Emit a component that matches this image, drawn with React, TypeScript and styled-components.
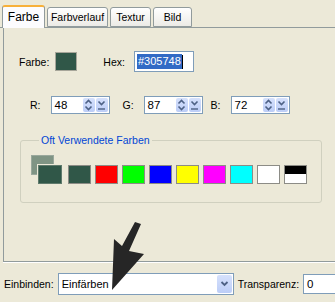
import styled, { createGlobalStyle } from 'styled-components';

const GlobalStyle = createGlobalStyle`
  html, body {
    margin: 0;
    padding: 0;
    background: #ece9d8;
  }
  body {
    font-family: "Liberation Sans", Arial, sans-serif;
    font-size: 10.5px;
    color: #000;
  }
`;

const swatches = ['#305748', '#ff0000', '#00ff00', '#0000ff', '#ffff00', '#ff00ff', '#00ffff', '#ffffff'];

const UpDownIcon = () => (
  <svg width="9" height="12" viewBox="0 0 9 12">
    <path d="M1.5 4.5 L4.5 1.5 L7.5 4.5" fill="none" stroke="#4d6185" strokeWidth="1.6" />
    <path d="M1.5 7.5 L4.5 10.5 L7.5 7.5" fill="none" stroke="#4d6185" strokeWidth="1.6" />
  </svg>
);

const DownLineIcon = () => (
  <svg width="9" height="12" viewBox="0 0 9 12">
    <path d="M1.5 2.5 L4.5 5.5 L7.5 2.5" fill="none" stroke="#4d6185" strokeWidth="1.6" />
    <path d="M1 10 H8" stroke="#4d6185" strokeWidth="1.4" />
  </svg>
);

const ChevronIcon = () => (
  <svg width="9" height="8" viewBox="0 0 9 8">
    <path d="M1.5 2 L4.5 5 L7.5 2" fill="none" stroke="#4d6185" strokeWidth="1.8" />
  </svg>
);

const SpinField = ({ label, value, ml }: { label: string; value: string; ml: number }) => (
  <Field $ml={ml}>
    <FieldLabel>{label}</FieldLabel>
    <SpinBox>
      <SpinValue>{value}</SpinValue>
      <SpinButton>
        <UpDownIcon />
      </SpinButton>
      <SpinButton>
        <DownLineIcon />
      </SpinButton>
    </SpinBox>
  </Field>
);

export default function App() {
  return (
    <Window>
      <GlobalStyle />
      <TabStrip>
        <Tab $active $width={43}>Farbe</Tab>
        <Tab $width={61}>Farbverlauf</Tab>
        <Tab $width={41}>Textur</Tab>
        <Tab $width={39}>Bild</Tab>
      </TabStrip>
      <Panel>
        <ColorRow>
          <Label>Farbe:</Label>
          <CurrentColor />
          <Label $ml={26}>Hex:</Label>
          <HexInput>
            <Selected>#305748</Selected>
            <Caret />
          </HexInput>
        </ColorRow>
        <RgbRow>
          <SpinField label="R:" value="48" ml={22} />
          <SpinField label="G:" value="87" ml={13} />
          <SpinField label="B:" value="72" ml={8} />
        </RgbRow>
        <Group>
          <Legend>Oft Verwendete Farben</Legend>
          <SwatchRow>
            <Compound>
              <BackSquare />
              <FrontSquare />
            </Compound>
            {swatches.map((c, i) => (
              <Swatch key={i} style={{ background: c }} />
            ))}
            <SplitSwatch />
          </SwatchRow>
        </Group>
      </Panel>
      <BottomRow>
        <Label>Einbinden:</Label>
        <Combo>
          <ComboText>Einfärben</ComboText>
          <ComboButton>
            <ChevronIcon />
          </ComboButton>
        </Combo>
        <Label $ml={4}>Transparenz:</Label>
        <SmallSpin>
          <SpinValue>0</SpinValue>
          <SpinButton>
            <UpDownIcon />
          </SpinButton>
        </SmallSpin>
      </BottomRow>
      <Pointer width="40" height="72" viewBox="0 0 40 72">
        <polygon points="25,0 31,2 19,29 34,32 2,68 4,17 12,24" fill="#262626" />
      </Pointer>
    </Window>
  );
}

const Window = styled.div`
  position: relative;
  width: 335px;
  height: 302px;
  overflow: hidden;
  padding-top: 5px;
  box-sizing: border-box;
  background: #ece9d8;
`;

const TabStrip = styled.div`
  display: flex;
  align-items: flex-end;
  height: 22px;
  padding-left: 2px;
  border-bottom: 1px solid #919b9c;
`;

const Tab = styled.div<{ $active?: boolean; $width: number }>`
  box-sizing: border-box;
  width: ${(p) => p.$width}px;
  height: ${(p) => (p.$active ? 23 : 20)}px;
  margin-bottom: ${(p) => (p.$active ? -1 : 0)}px;
  margin-right: 2px;
  padding-top: 3px;
  text-align: center;
  font-size: ${(p) => (p.$active ? 12 : 10.5)}px;
  border: 1px solid #919b9c;
  border-bottom: ${(p) => (p.$active ? 'none' : '1px solid #919b9c')};
  border-top: ${(p) => (p.$active ? '2px solid #f7b039' : '1px solid #919b9c')};
  border-radius: 3px 3px 0 0;
  background: ${(p) => (p.$active ? '#fcfcfe' : 'linear-gradient(#ffffff, #ecebe6)')};
  white-space: nowrap;
`;

const Panel = styled.div`
  margin-left: 3px;
  height: 234px;
  padding: 23px 0 0 15px;
  box-sizing: border-box;
  border-left: 1px solid #919b9c;
  border-bottom: 1px solid #919b9c;
  box-shadow: 0 1px 0 #ffffff;
`;

const ColorRow = styled.div`
  display: flex;
  align-items: center;
  height: 21px;
`;

const Label = styled.span<{ $ml?: number }>`
  flex-shrink: 0;
  margin-left: ${(p) => p.$ml ?? 0}px;
  white-space: nowrap;
`;

const CurrentColor = styled.div`
  width: 20px;
  height: 17px;
  margin-left: 6px;
  background: #305748;
  border: 1px solid #a7a69a;
`;

const HexInput = styled.div`
  display: flex;
  align-items: center;
  width: 60px;
  height: 21px;
  margin-left: 9px;
  padding-left: 2px;
  box-sizing: border-box;
  border: 1px solid #7f9db9;
  background: #fff;
  font-size: 11px;
`;

const Selected = styled.span`
  background: #316ac5;
  color: #fff;
  line-height: 15px;
  padding: 0 1px;
`;

const Caret = styled.span`
  width: 1px;
  height: 14px;
  background: #000;
`;

const RgbRow = styled.div`
  display: flex;
  align-items: center;
  height: 18px;
  margin-top: 24px;
  margin-left: -11px;
`;

const Field = styled.div<{ $ml: number }>`
  display: flex;
  align-items: center;
  margin-left: ${(p) => p.$ml}px;
`;

const FieldLabel = styled.span`
  margin-right: 10px;
`;

const SpinBox = styled.div`
  display: flex;
  flex-shrink: 0;
  align-items: center;
  gap: 1px;
  width: 59px;
  height: 18px;
  padding: 0 1px 0 3px;
  box-sizing: border-box;
  border: 1px solid #7f9db9;
  background: #fff;
`;

const SpinValue = styled.span`
  flex: 1;
  font-size: 11.5px;
`;

const SpinButton = styled.div`
  display: flex;
  align-items: center;
  justify-content: center;
  width: 12px;
  height: 14px;
  border-radius: 2px;
  background: linear-gradient(#d6e1fc, #bccdf7);
`;

const Group = styled.fieldset`
  width: 302px;
  margin: 20px 0 0 1px;
  padding: 8px 0 18px 10px;
  box-sizing: border-box;
  border: 1px solid #d0d0bf;
  border-radius: 3px;
`;

const Legend = styled.legend`
  padding: 0 2px;
  margin-left: 8px;
  color: #0046d5;
  font-size: 10.5px;
  line-height: 13px;
`;

const SwatchRow = styled.div`
  display: flex;
  align-items: flex-end;
  gap: 4px;
`;

const Compound = styled.div`
  position: relative;
  width: 31px;
  height: 29px;
  margin-right: 2px;
`;

const BackSquare = styled.div`
  position: absolute;
  left: 0;
  top: 0;
  width: 23px;
  height: 20px;
  background: #7f9484;
  border: 1px solid #9aa89c;
  box-sizing: border-box;
`;

const FrontSquare = styled.div`
  position: absolute;
  left: 7px;
  top: 10px;
  width: 24px;
  height: 19px;
  background: #305748;
  border: 1px solid #5f7a6c;
  box-shadow: -1px -1px 0 #ece9d8;
  box-sizing: border-box;
`;

const Swatch = styled.div`
  width: 23px;
  height: 19px;
  box-sizing: border-box;
  border: 1px solid #8c8c86;
`;

const SplitSwatch = styled(Swatch)`
  background: linear-gradient(#000 50%, #fff 50%);
`;

const BottomRow = styled.div`
  display: flex;
  align-items: center;
  height: 22px;
  margin-top: 11px;
  padding-left: 4px;
`;

const Combo = styled.div`
  display: flex;
  flex-shrink: 0;
  align-items: center;
  width: 176px;
  height: 22px;
  margin-left: 4px;
  padding: 0 1px 0 3px;
  box-sizing: border-box;
  border: 1px solid #7f9db9;
  background: #fff;
`;

const ComboText = styled.span`
  flex: 1;
  font-size: 11px;
`;

const ComboButton = styled(SpinButton)`
  width: 15px;
  height: 18px;
`;

const SmallSpin = styled(SpinBox)`
  width: 50px;
  height: 20px;
  margin-left: 4px;
`;

const Pointer = styled.svg`
  position: absolute;
  left: 110px;
  top: 222px;
`;
